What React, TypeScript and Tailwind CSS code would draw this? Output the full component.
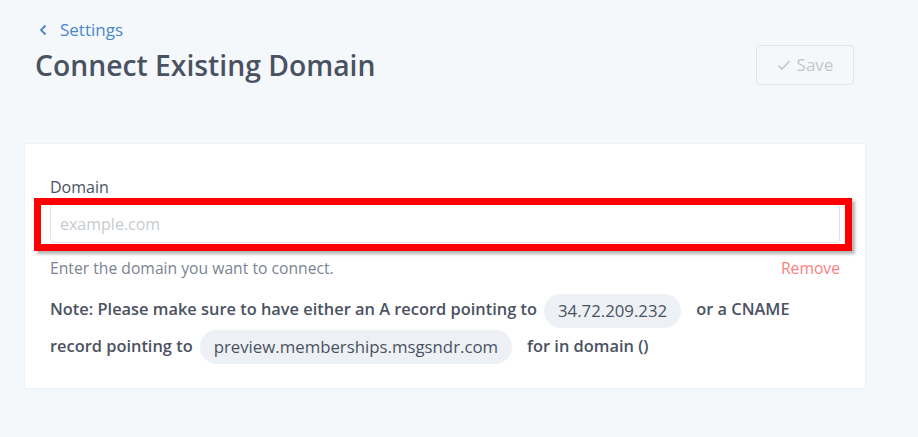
import React from "react";

export default function App() {
  return (
    <div className="min-h-[437px] w-[918px] bg-[#f5f8fb] font-['Open_Sans',sans-serif] text-[#4a5262]">
      <div className="flex items-start justify-between pl-[35px] pr-[64px] pt-[18px]">
        <div>
          <a className="flex items-center gap-[12px] pl-[4px] text-[17px] leading-[24px] text-[#4a86d0]">
            <svg width="9" height="12" viewBox="0 0 9 12" fill="none" stroke="#4a86d0" strokeWidth="1.8">
              <path d="M6.5 1.5 L2 6 L6.5 10.5" />
            </svg>
            Settings
          </a>
          <h1 className="mt-[5px] text-[28.3px] font-semibold leading-[36px] text-[#4a5262]">Connect Existing Domain</h1>
        </div>
        <button className="mt-[27px] flex h-[40px] w-[98px] items-center justify-center gap-[6px] rounded-[4px] border border-[#e2e5e8] bg-[#f6f7f8] text-[17px] text-[#c3c7cc]">
          <svg width="14" height="12" viewBox="0 0 14 12" fill="none" stroke="#c3c7cc" strokeWidth="1.6">
            <path d="M1.5 6.5 L5 10 L12.5 2" />
          </svg>
          Save
        </button>
      </div>
      <div className="ml-[25px] mt-[59px] w-[840px] bg-white px-[25px] pb-[24px] pt-[32px] shadow-[0_0_2px_rgba(0,0,0,0.08)]">
        <label className="block text-[16px] leading-[22px] text-[#4a5262]">Domain</label>
        <div className="relative mt-[6px]">
          <input
            placeholder="example.com"
            className="h-[39px] w-full rounded-[4px] border border-[#dfe2e6] bg-white px-[9px] text-[16px] text-[#4a5262] outline-none placeholder:text-[#c7cbd0]"
          />
          <div className="pointer-events-none absolute left-[-16px] right-[-12px] top-[-6px] bottom-[-8px] border-[7px] border-[#ff0000] shadow-[3px_3px_3px_rgba(0,0,0,0.3)]" />
        </div>
        <div className="mt-[14px] flex justify-between text-[15.7px] leading-[22px]">
          <span className="text-[#7b8391]">Enter the domain you want to connect.</span>
          <span className="text-[#fa7f80]">Remove</span>
        </div>
        <p className="mt-[12px] text-[16.4px] font-semibold leading-[36px] text-[#4a5262]">
          Note: Please make sure to have either an A record pointing to
          <span className="ml-[7px] mr-[15px] inline-block rounded-full bg-[#edf1f5] px-[14px] py-[5px] align-middle text-[16.8px] font-normal leading-[24px]">34.72.209.232</span>
          or a CNAME record pointing to
          <span className="ml-[7px] mr-[15px] inline-block rounded-full bg-[#edf1f5] px-[14px] py-[5px] align-middle text-[16.8px] font-normal leading-[24px]">preview.memberships.msgsndr.com</span>
          for in domain ()
        </p>
      </div>
    </div>
  );
}
